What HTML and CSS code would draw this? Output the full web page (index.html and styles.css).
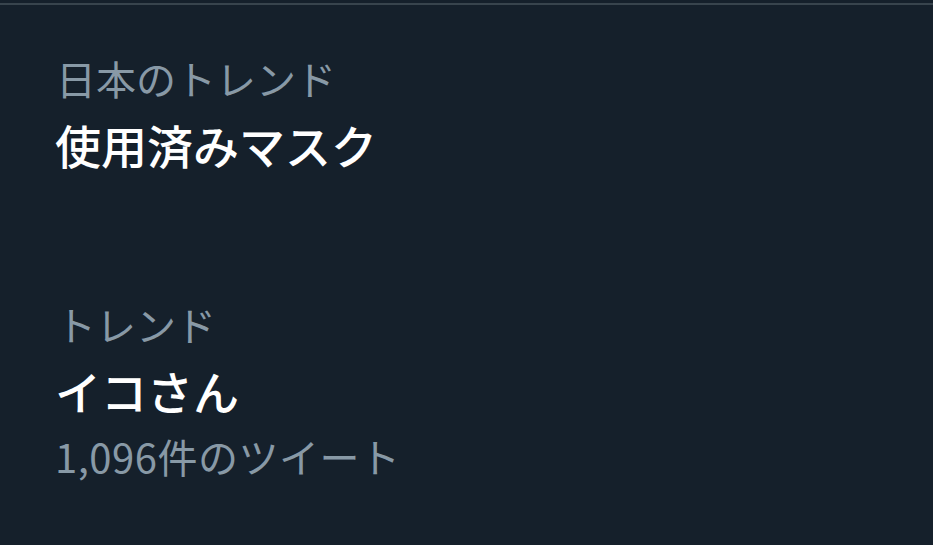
FILE: index.html
```html
<!DOCTYPE html>
<html lang="ja">
<head>
<meta charset="utf-8">
<link rel="stylesheet" href="styles.css">
</head>
<body>
<div class="panel">
  <div class="trend first">
    <div class="label">日本のトレンド</div>
    <div class="title">使用済みマスク</div>
  </div>
  <div class="trend second">
    <div class="label">トレンド</div>
    <div class="title">イコさん</div>
    <div class="count">1,096件のツイート</div>
  </div>
</div>
</body>
</html>
```
FILE: styles.css
```css
html, body {
  margin: 0;
  padding: 0;
  background: #15202b;
}
body {
  width: 933px;
  height: 545px;
  overflow: hidden;
  font-family: "Noto Sans CJK JP", "Noto Sans", sans-serif;
}
.panel {
  margin-top: 3px;
  border-top: 2px solid #38444d;
  display: flex;
  flex-direction: column;
  padding-left: 55px;
}
.trend {
  display: flex;
  flex-direction: column;
}
.first {
  padding-top: 39px;
}
.second {
  padding-top: 114px;
}
.label {
  color: #8899a6;
  font-size: 40px;
  line-height: 68px;
  padding-left: 1px;
}
.title {
  color: #ffffff;
  font-size: 46px;
  font-weight: 500;
  line-height: 64px;
}
.count {
  color: #8899a6;
  font-size: 40px;
  line-height: 68px;
  letter-spacing: 0.5px;
}
```
